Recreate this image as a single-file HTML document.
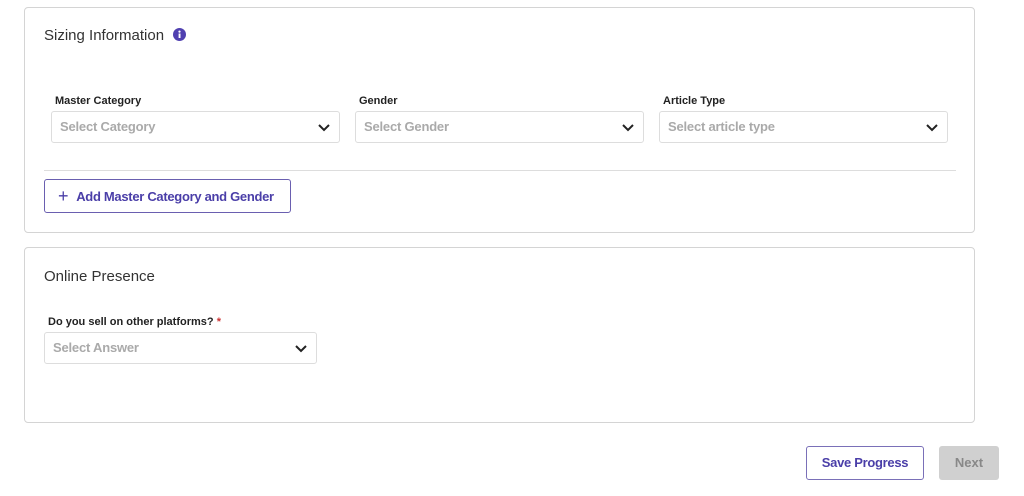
<!DOCTYPE html><html><head><style>
body{margin:0;width:1024px;height:496px;background:#fff;font-family:"Liberation Sans",sans-serif;position:relative;overflow:hidden}
.card{position:absolute;left:24px;width:951px;border:1px solid #d4d4d4;border-radius:4px;box-sizing:border-box}
.abs{position:absolute;white-space:nowrap}
.title{font-size:15px;color:#333}
.lbl{font-size:11px;font-weight:bold;color:#222}
.sel{position:absolute;height:32px;border:1px solid #ddd;border-radius:3px;box-sizing:border-box;color:#aaa;font-weight:bold;font-size:13px;line-height:30px;padding-left:8px;letter-spacing:-0.2px}
.sel svg{position:absolute;right:8px;top:11px}
</style></head><body>
<div class="card" style="top:7px;height:226px"></div>
<div class="abs title" style="left:44px;top:27px">Sizing Information</div>
<svg class="abs" style="left:173px;top:28px" width="13" height="13"><circle cx="6.5" cy="6.5" r="6.5" fill="#5040b0"/><rect x="5.6" y="5.5" width="1.9" height="4.5" fill="#fff"/><circle cx="6.5" cy="3.6" r="1.1" fill="#fff"/></svg>
<div class="abs lbl" style="left:55px;top:95px">Master Category</div>
<div class="abs lbl" style="left:359px;top:95px">Gender</div>
<div class="abs lbl" style="left:663px;top:95px">Article Type</div>
<div class="sel" style="left:51px;top:111px;width:289px">Select Category<svg width="14" height="9"><path d="M2 2l5 5 5-5" stroke="#222" stroke-width="2" fill="none"/></svg></div>
<div class="sel" style="left:355px;top:111px;width:289px">Select Gender<svg width="14" height="9"><path d="M2 2l5 5 5-5" stroke="#222" stroke-width="2" fill="none"/></svg></div>
<div class="sel" style="left:659px;top:111px;width:289px">Select article type<svg width="14" height="9"><path d="M2 2l5 5 5-5" stroke="#222" stroke-width="2" fill="none"/></svg></div>
<div class="abs" style="left:44px;top:170px;width:912px;height:1px;background:#ddd"></div>
<div class="abs" style="left:44px;top:179px;width:247px;height:34px;border:1px solid #6a5fb0;border-radius:3px;box-sizing:border-box;color:#4a3ea8;font-weight:bold;font-size:13px;letter-spacing:-0.3px;line-height:32px;padding-left:13px"><span style="font-size:18px;font-weight:normal;margin-right:8px;vertical-align:-1px">+</span>Add Master Category and Gender</div>
<div class="card" style="top:247px;height:176px"></div>
<div class="abs title" style="left:44px;top:268px">Online Presence</div>
<div class="abs lbl" style="left:48px;top:316px">Do you sell on other platforms? <span style="color:#c33">*</span></div>
<div class="sel" style="left:44px;top:332px;width:273px">Select Answer<svg width="14" height="9"><path d="M2 2l5 5 5-5" stroke="#222" stroke-width="2" fill="none"/></svg></div>
<div class="abs" style="left:806px;top:446px;width:118px;height:34px;border:1px solid #7a70b8;border-radius:3px;box-sizing:border-box;color:#4a3ea8;font-weight:bold;font-size:13px;letter-spacing:-0.3px;line-height:32px;text-align:center">Save Progress</div>
<div class="abs" style="left:939px;top:446px;width:60px;height:34px;background:#d0d0d0;border-radius:3px;color:#888;font-weight:bold;font-size:13px;line-height:34px;text-align:center">Next</div>
</body></html>
